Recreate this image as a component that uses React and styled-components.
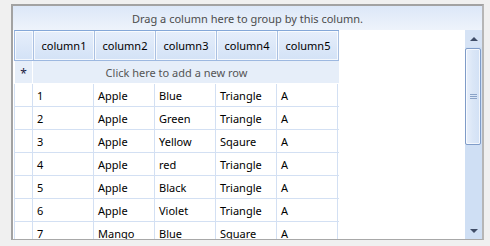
import React from 'react';
import styled, { createGlobalStyle } from 'styled-components';

const GlobalStyle = createGlobalStyle`
	body {
		margin: 0;
		background: #f0f0f0;
		font-family: 'Segoe UI', 'Noto Sans', 'Liberation Sans', sans-serif;
		font-size: 11px;
	}
`;

const columns = ['column1', 'column2', 'column3', 'column4', 'column5'];

const rows = [
	['1', 'Apple', 'Blue', 'Triangle', 'A'],
	['2', 'Apple', 'Green', 'Triangle', 'A'],
	['3', 'Apple', 'Yellow', 'Sqaure', 'A'],
	['4', 'Apple', 'red', 'Triangle', 'A'],
	['5', 'Apple', 'Black', 'Triangle', 'A'],
	['6', 'Apple', 'Violet', 'Triangle', 'A'],
	['7', 'Mango', 'Blue', 'Square', 'A'],
];

function App() {
	return (
		<>
			<GlobalStyle />
			<Frame>
				<GroupPanel>Drag a column here to group by this column.</GroupPanel>
				<Body>
					<GridArea>
						<HeaderRow>
							<HeaderCell $indicator />
							{columns.map((c) => (
								<HeaderCell key={c}>{c}</HeaderCell>
							))}
						</HeaderRow>
						<NewRow>
							<Indicator $new>*</Indicator>
							<NewRowText>Click here to add a new row</NewRowText>
						</NewRow>
						{rows.map((r) => (
							<Row key={r[0]}>
								<Indicator />
								{r.map((v, i) => (
									<Cell key={i}>{v}</Cell>
								))}
							</Row>
						))}
					</GridArea>
					<ScrollBar>
						<ScrollButton>
							<Arrow $up />
						</ScrollButton>
						<Thumb>
							<Grip>
								<span />
								<span />
								<span />
							</Grip>
						</Thumb>
						<Track />
						<ScrollButton $down>
							<Arrow />
						</ScrollButton>
					</ScrollBar>
				</Body>
			</Frame>
		</>
	);
}
export default App;

const Frame = styled.div`
	margin: 4px 0 0 11px;
	width: 469px;
	height: 233px;
	border: 2px solid #a2a2a2;
	border-right-color: #b6b6b6;
	border-bottom: 1px solid #a8a8a8;
	display: flex;
	flex-direction: column;
	background: #fff;
	overflow: hidden;
`;

const GroupPanel = styled.div`
	height: 24px;
	flex: none;
	display: flex;
	align-items: center;
	justify-content: center;
	color: #4c4c4c;
	background: linear-gradient(#dce7f8, #eef3fb);
`;

const Body = styled.div`
	flex: 1;
	display: flex;
	min-height: 0;
`;

const GridArea = styled.div`
	flex: 1;
	padding-left: 1px;
	overflow: hidden;
	background: #fff;
`;

const HeaderRow = styled.div`
	display: flex;
	width: 324px;
	height: 29px;
	border-top: 1px solid #84a7d8;
	border-bottom: 1px solid #9db8e0;
	border-left: 1px solid #9db8e0;
`;

const HeaderCell = styled.div`
	width: ${(p) => (p.$indicator ? '18px' : '60px')};
	flex: none;
	display: flex;
	align-items: center;
	justify-content: center;
	color: #000;
	background: linear-gradient(#e6eefb, #d3e2f6);
	box-shadow: inset 0 0 0 1px rgba(255, 255, 255, 0.75);
	border-right: 1px solid #a9c0e2;
`;

const NewRow = styled.div`
	display: flex;
	width: 325px;
	height: 22px;
	background: #e6eef9;
	border-bottom: 1px solid #fff;
`;

const Indicator = styled.div`
	width: 19px;
	flex: none;
	display: flex;
	align-items: center;
	justify-content: center;
	border-right: 1px solid ${(p) => (p.$new ? '#fff' : '#d3e0f3')};
	border-left: 1px solid ${(p) => (p.$new ? '#fff' : '#d3e0f3')};
	background: ${(p) => (p.$new ? '#e6eef9' : '#fff')};
	color: #1a1a40;
	font-size: 12px;
	padding-top: 3px;
	box-sizing: border-box;
`;

const NewRowText = styled.div`
	flex: 1;
	display: flex;
	align-items: center;
	justify-content: center;
	padding-right: 19px;
	color: #555;
`;

const Row = styled.div`
	display: flex;
	width: 325px;
	height: 22px;
	border-bottom: 1px solid #d3e0f3;
`;

const Cell = styled.div`
	flex: none;
	display: flex;
	align-items: center;
	padding-left: 4px;
	box-sizing: border-box;
	width: 61px;
	border-right: 1px solid #d3e0f3;
	color: #000;
	white-space: nowrap;
	overflow: hidden;
`;

const ScrollBar = styled.div`
	width: 17px;
	flex: none;
	display: flex;
	flex-direction: column;
	background: #cfdff4;
`;

const ScrollButton = styled.div`
	height: 17px;
	flex: none;
	display: flex;
	align-items: center;
	justify-content: center;
	background: ${(p) => (p.$down ? '#cfdff4' : '#d6e3f5')};
`;

const Arrow = styled.div`
	width: 0;
	height: 0;
	border-left: 4px solid transparent;
	border-right: 4px solid transparent;
	${(p) =>
		p.$up
			? 'border-bottom: 4px solid #3f4c66;'
			: 'border-top: 4px solid #3f4c66;'}
`;

const Thumb = styled.div`
	height: 95px;
	flex: none;
	margin: 1px 1px 0 0;
	border: 1px solid #7f9cc8;
	border-radius: 2px;
	background: linear-gradient(90deg, #e9f0fb 0%, #dbe7f7 45%, #d2e1f5 100%);
	box-shadow: inset 0 0 0 1px rgba(255, 255, 255, 0.7);
	display: flex;
	align-items: center;
	justify-content: center;
`;

const Grip = styled.div`
	display: flex;
	flex-direction: column;
	gap: 1px;
	span {
		display: block;
		width: 7px;
		height: 1px;
		background: #8aa3c8;
	}
`;

const Track = styled.div`
	flex: 1;
`;
